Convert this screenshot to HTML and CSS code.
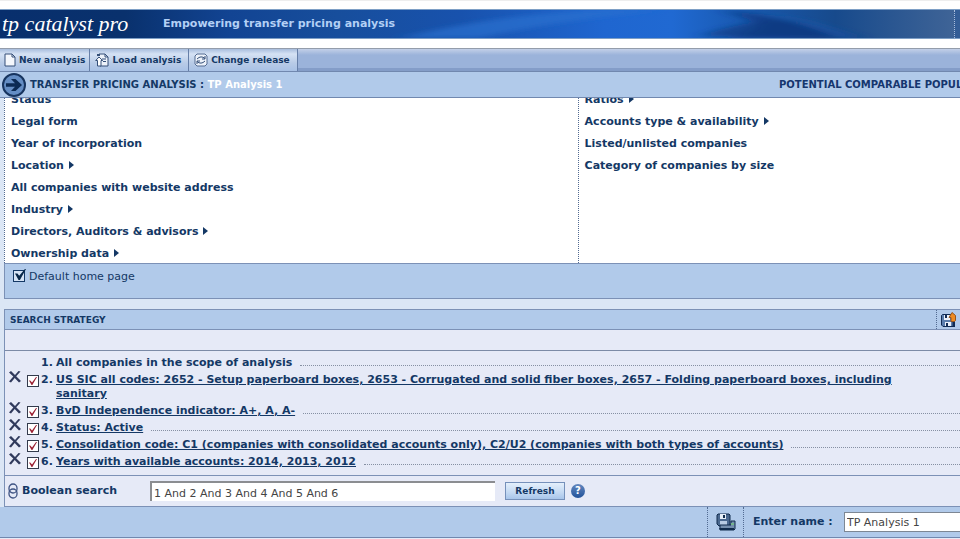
FILE: index.html
```html
<!DOCTYPE html>
<html lang="en">
<head>
<meta charset="utf-8">
<title>tp catalyst pro</title>
<link rel="stylesheet" href="styles.css">
</head>
<body>
<svg class="defs" aria-hidden="true">
  <symbol id="cross" viewBox="0 0 12 12"><path d="M0 1.500L2 0l4 4L9.500 0l2 .5L7.200 5.300 12 10l-2 1.500-4.300-4.500L2 11.500 0 10.500l4.300-5z" fill="#303a5c"/></symbol>
</svg>
<header class="banner">
  <svg class="waves" viewBox="0 0 960 28" preserveAspectRatio="none" aria-hidden="true">
    <defs>
      <linearGradient id="base">
        <stop offset="0" stop-color="#082f6d"/><stop offset=".13" stop-color="#09316d"/><stop offset=".24" stop-color="#124493"/><stop offset=".35" stop-color="#174e9c"/><stop offset=".48" stop-color="#1852ad"/><stop offset=".63" stop-color="#1f66d0"/><stop offset=".7" stop-color="#2069d2"/><stop offset=".78" stop-color="#1858ad"/><stop offset=".87" stop-color="#174a8c"/><stop offset="1" stop-color="#416597"/>
      </linearGradient>
      <filter id="soft" x="-10%" y="-30%" width="120%" height="160%"><feGaussianBlur stdDeviation="8 2"/></filter>
    </defs>
    <rect width="960" height="28" fill="url(#base)"/>
    <g filter="url(#soft)">
      <path d="M400 28Q500 4 600 0H660Q550 12 480 28Z" fill="#2870cf" opacity=".7"/>
      <path d="M720 0Q800 8 865 28H725Q790 18 720 0Z" fill="#103a82" opacity=".8"/>
      <path d="M700 26Q750 8 800 10L850 28Z" fill="#103a82" opacity=".7"/>
      <path d="M755 4Q810 8 855 28H842Q800 10 755 4Z" fill="#2872c9" opacity=".5"/>
    </g>
  </svg>
  <span class="logo">tp catalyst pro</span>
  <span class="tagline">Empowering transfer pricing analysis</span>
  <span class="banner-end"></span>
</header>

<nav class="toolbar">
  <button type="button"><svg width="12" height="14" viewBox="0 0 12 14"><path d="M1 1h7l3 3v9H1z" fill="#f4f7fc" stroke="#344f78"/><path d="M8 1v3h3" fill="none" stroke="#344f78"/></svg>New analysis</button>
  <button type="button"><svg width="14" height="14" viewBox="0 0 14 14"><path d="M4 1h6l3 3v9H5" fill="#edf2fa" stroke="#344f78"/><path d="M10 1v3h3M7 6h4M8 8.500h3" fill="none" stroke="#344f78"/><path d="M4 4L.7 7.500H2.500V13H6V7.500h1.600z" fill="#fff" stroke="#344f78"/><path d="M2 1h3v2H2z" fill="#344f78"/></svg>Load analysis</button>
  <button type="button"><svg width="14" height="14" viewBox="0 0 14 14"><path d="M1 3l2-2h8l2 2v8l-2 2H3l-2-2z" fill="#edf2fa" stroke="#526a91"/><path d="M3 6q4-4 8-.5M11 3v3H8M11 8q-4 4-8 .5M3 11V8h3" fill="none" stroke="#344f78"/></svg>Change release</button>
</nav>

<section class="title-bar">
  <svg class="go" width="24" height="24" viewBox="0 0 24 24" aria-hidden="true"><circle cx="12" cy="12" r="11" fill="#648dc4" stroke="#17345f" stroke-width="2"/><path d="M4 10.200h9L9 6h4.500l6.500 6-6.500 6H9l4-4.200H4z" fill="#0b2a54"/></svg>
  <h1>TRANSFER PRICING ANALYSIS : <span>TP Analysis 1</span></h1>
  <h2>POTENTIAL COMPARABLE POPULATION</h2>
</section>

<main>
  <section class="criteria">
    <ul>
      <li><a href="#">Status</a></li>
      <li><a href="#">Legal form</a></li>
      <li><a href="#">Year of incorporation</a></li>
      <li><a href="#" class="more">Location</a></li>
      <li><a href="#">All companies with website address</a></li>
      <li><a href="#" class="more">Industry</a></li>
      <li><a href="#" class="more">Directors, Auditors &amp; advisors</a></li>
      <li><a href="#" class="more">Ownership data</a></li>
    </ul>
    <ul>
      <li><a href="#" class="more">Ratios</a></li>
      <li><a href="#" class="more">Accounts type &amp; availability</a></li>
      <li><a href="#">Listed/unlisted companies</a></li>
      <li><a href="#">Category of companies by size</a></li>
    </ul>
  </section>
  <div class="home-option">
    <input type="checkbox" id="home" class="home-check" checked><label for="home">Default home page</label>
  </div>

  <section class="strategy">
    <header>
      <h2>SEARCH STRATEGY</h2>
      <button type="button" class="save-search" aria-label="Save search"><svg width="16" height="16" viewBox="0 0 16 16"><path d="M1.500 3.500l1-1H13v12H3l-1.500-1.500z" fill="#5b7eae" stroke="#102b54"/><path d="M4 3h6v5H4zM5 10h6v4H5z" fill="#eaf0fa"/><path d="M5 3h2v3H5zM6 11h2v3H6zM13 9h2v6H9v-1h4z" fill="#102b54"/><path d="M12 .5l3.500 3v5l-1 1h-3.500v-4H9z" fill="#ee8b22" stroke="#94551f"/></svg></button>
    </header>
    <div class="spacer-row"></div>
    <ol>
      <li><span class="num">1.</span><span class="step">All companies in the scope of analysis</span><i></i></li>
      <li><button type="button" aria-label="Delete step 2"><svg width="12" height="12"><use href="#cross"/></svg></button><input type="checkbox" id="s2" aria-label="Step 2" checked><label class="num" for="s2">2.</label><a class="step" href="#">US SIC all codes: 2652 - Setup paperboard boxes, 2653 - Corrugated and solid fiber boxes, 2657 - Folding paperboard boxes, including sanitary</a></li>
      <li><button type="button" aria-label="Delete step 3"><svg width="12" height="12"><use href="#cross"/></svg></button><input type="checkbox" id="s3" aria-label="Step 3" checked><label class="num" for="s3">3.</label><a class="step" href="#">BvD Independence indicator: A+, A, A-</a><i></i></li>
      <li><button type="button" aria-label="Delete step 4"><svg width="12" height="12"><use href="#cross"/></svg></button><input type="checkbox" id="s4" aria-label="Step 4" checked><label class="num" for="s4">4.</label><a class="step" href="#">Status: Active</a><i></i></li>
      <li><button type="button" aria-label="Delete step 5"><svg width="12" height="12"><use href="#cross"/></svg></button><input type="checkbox" id="s5" aria-label="Step 5" checked><label class="num" for="s5">5.</label><a class="step" href="#">Consolidation code: C1 (companies with consolidated accounts only), C2/U2 (companies with both types of accounts)</a><i></i></li>
      <li><button type="button" aria-label="Delete step 6"><svg width="12" height="12"><use href="#cross"/></svg></button><input type="checkbox" id="s6" aria-label="Step 6" checked><label class="num" for="s6">6.</label><a class="step" href="#">Years with available accounts: 2014, 2013, 2012</a><i></i></li>
    </ol>
    <form class="boolean">
      <svg width="10" height="16" viewBox="0 0 10 16" aria-hidden="true"><g fill="none" stroke="#3f5484" stroke-width="1.300"><rect x="1" y="1" width="8" height="9" rx="4"/><rect x="1" y="6" width="8" height="9" rx="4"/></g></svg>
      <label for="bool">Boolean search</label>
      <input type="text" id="bool" value="1 And 2 And 3 And 4 And 5 And 6">
      <button type="button" class="refresh">Refresh</button>
      <button type="button" class="help" aria-label="Help">?</button>
    </form>
  </section>
</main>

<footer class="save-bar">
  <button type="button" aria-label="Save analysis"><svg width="20" height="18" viewBox="0 0 20 18"><path d="M1 2l1-1h11l1 1v11H3l-2-2z" fill="#4a688f" stroke="#102b4c"/><path d="M4 1h6v5H4z" fill="#e6eef8"/><path d="M7 2h2v3H7z" fill="#102b4c"/><path d="M4 8h7v5H4z" fill="#b8cbe3"/><path d="M4 12h11V8h4v8l-1 1H4z" fill="#758fae" stroke="#102b4c"/><path d="M3 15h15v2H4z" fill="#102b4c"/><path d="M15 10h3v2h-3z" fill="#75b58d"/></svg></button>
  <div class="name-field"><label for="name">Enter name :</label><input type="text" id="name" value="TP Analysis 1"></div>
</footer>
</body>
</html>
```
FILE: styles.css
```css
* { box-sizing: border-box; }
html { background: #e6eaf7; }
body {
  margin: 0;
  padding-top: 9px;
  border-top: 1px solid #eee;
  overflow-x: hidden;
  background: #fff;
  color: #143865;
  font: bold 11px/14px "DejaVu Sans", Verdana, sans-serif;
}
h1, h2, ul, ol { margin: 0; padding: 0; font-size: 11px; list-style: none; }
a { color: inherit; }
button { padding: 0; border: 0; background: none; color: inherit; font: inherit; }
input { font: 11px/14px "DejaVu Sans", Verdana, sans-serif; color: #444; margin: 0; border-radius: 0; }
svg { display: block; flex: none; }
.defs { display: none; }

.banner {
  position: relative;
  z-index: 0;
  display: flex;
  align-items: center;
  height: 28px;
  margin-bottom: 10px;
  outline: 1px solid #7e9fc6;
}
.waves { position: absolute; width: 100%; height: 100%; z-index: -1; }
.logo {
  width: 163px;
  padding-left: 2px;
  color: #fff;
  font: italic 22px/26px "Liberation Serif", serif;
  white-space: nowrap;
}
.tagline { color: #b3d0f5; }
.banner-end { align-self: stretch; width: 6px; margin-left: auto; border-left: 1px dotted #a9bddb; background: #345d96; }

.toolbar {
  display: flex;
  height: 24px;
  border-top: 1px solid #949dab;
  border-bottom: 1px solid #7188af;
  background: linear-gradient(#c3d0e8, #9bb3da 6px, #9bb3da 19px, #849dc8 19px);
}
.toolbar button {
  display: flex;
  align-items: center;
  gap: 3px;
  padding: 0 7px 0 5px;
  border-right: 1px solid #667fa8;
  background: linear-gradient(#a8bddd, #d5e2f4 5px, #b8cbe7 14px, #a8c1e5);
  font-size: 9px;
}
.toolbar button:first-child { padding: 0 4px; }

.title-bar {
  display: flex;
  align-items: center;
  gap: 4px;
  height: 26px;
  padding-left: 2px;
  border-bottom: 1px solid #7188af;
  background: #b1caea;
  overflow: hidden;
}
.title-bar h1, .title-bar h2 { font-size: 10px; white-space: nowrap; }
.title-bar span { color: #fff; }
.title-bar h2 { width: 181px; margin-left: auto; color: #16366e; }

main { padding-left: 4px; background: #dbe6f5; }
.criteria {
  display: grid;
  grid-template-columns: 3fr 2fr;
  background: #fff;
  overflow: hidden;
}
.criteria ul { margin: -9px 0 -2px; padding-left: 6px; border-left: 1px dotted #526a91; }
.criteria li { line-height: 22px; }
.criteria a { text-decoration: none; }
.more::after {
  content: "";
  display: inline-block;
  margin-left: 5px;
  border: 4px solid transparent;
  border-left: 5px solid #143865;
  border-right: 0;
}
.home-option {
  display: flex;
  gap: 4px;
  height: 36px;
  padding: 6px 8px;
  margin-bottom: 10px;
  border: 1px solid #7c91b6;
  border-right: 0;
  background: #b1caea;
  font-weight: normal;
}
input[type="checkbox"] {
  position: relative;
  appearance: none;
  flex: none;
  width: 12px;
  height: 12px;
  border: 1px solid #333b4c;
  background: #fff;
}
input[type="checkbox"]:checked::after {
  content: "";
  position: absolute;
  inset: 1px;
  background: #9a2032;
  clip-path: polygon(0 45%, 15% 45%, 38% 70%, 88% 0, 100% 0, 42% 100%, 32% 100%);
}
input.home-check { background: #d5e3f5; border-color: #143865; }
input.home-check:checked::after {
  inset: -2px -2px 1px 1px;
  background: #082748;
  clip-path: polygon(0 40%, 22% 40%, 38% 62%, 90% 0, 100% 0, 45% 100%, 32% 100%);
}

.strategy { border: 1px solid #7c91b6; border-right: 0; background: #e6eaf7; }
.strategy header {
  display: flex;
  align-items: center;
  height: 20px;
  padding-left: 5px;
  border-bottom: 1px solid #7c91b6;
  background: #b1caea;
}
.strategy h2 { font-size: 9px; }
.save-search { align-self: stretch; margin-left: auto; width: 24px; padding: 1px 3px; border-left: 1px dotted #526a91; }
.spacer-row { height: 21px; border-bottom: 1px solid #7c8ba6; }
ol { padding: 3px 0 5px 4px; }
.strategy li { display: flex; align-items: flex-start; padding: 2px 0 1px; }
.strategy li button { width: 18px; flex: none; margin-top: -2px; }
.strategy li input { margin: 2px 2px 0 0; }
.num { flex: none; width: 15px; }
.num:first-child { margin-left: 32px; }
.step { max-width: 880px; }
.strategy i { flex: 1; margin: 9px 0 0 8px; border-top: 1px dotted #8690a3; }
.boolean { display: flex; align-items: center; height: 31px; padding-left: 3px; border-top: 1px solid #7c91b6; }
.boolean label { width: 128px; margin-left: 4px; }
.boolean input { width: 345px; height: 20px; padding: 2px 2px 0; border: 0 solid #8b8d91; border-width: 2px 0 0 2px; background: #fff; }
.refresh {
  width: 60px;
  height: 18px;
  margin: 0 6px 0 10px;
  border: 1px solid #7590ba;
  background: linear-gradient(#e4effb, #c5daf3 9px, #a8c5ea);
  font-size: 9px;
}
.help { width: 14px; height: 14px; border-radius: 50%; background: linear-gradient(#6488bf, #21529a); color: #fff; font-size: 10px; line-height: 14px; }

.save-bar {
  display: flex;
  justify-content: flex-end;
  height: 31px;
  border-bottom: 1px solid #7188af;
  background: #b1caea;
  overflow: hidden;
}
.save-bar button { width: 37px; padding: 0 8px; border: 1px dotted #526a91; border-width: 0 1px; }
.name-field { display: flex; align-items: center; width: 216px; padding-left: 9px; }
.name-field label { flex: none; width: 91px; }
.name-field input { flex: none; width: 150px; height: 20px; padding: 1px 2px; border: 1px solid #7d8794; }
```
